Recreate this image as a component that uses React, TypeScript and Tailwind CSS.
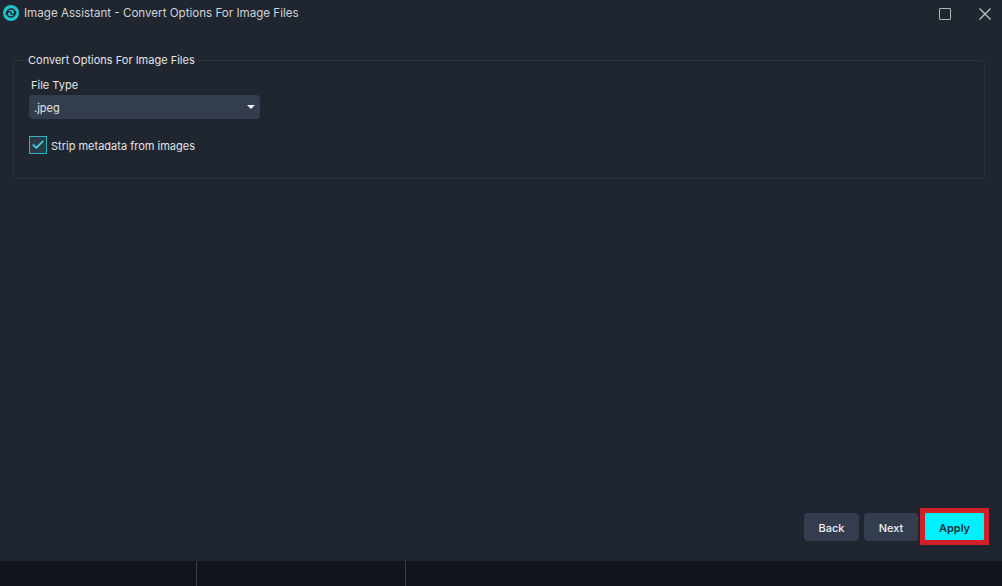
import { Check } from 'lucide-react';

function Logo() {
  return (
    <svg width="16" height="16" viewBox="0 0 16 16" fill="none" className="-mt-[1px]">
      <circle cx="8" cy="8" r="8" fill="#1fc4cf" />
      <path
        d="M3.4 9.4C3 6.2 5.6 3.7 8.5 4c1.9.2 3.2 1.5 3.4 3 .1 1.3-.9 2.4-2.2 2.4-1.1 0-1.8-.8-1.8-1.6"
        stroke="#1c2631"
        strokeWidth="1.4"
        strokeLinecap="round"
      />
      <path
        d="M12.6 6.6c.4 3.2-2.2 5.7-5.1 5.4-1.9-.2-3.2-1.5-3.4-3-.1-1.3.9-2.4 2.2-2.4 1.1 0 1.8.8 1.8 1.6"
        stroke="#1c2631"
        strokeWidth="1.4"
        strokeLinecap="round"
      />
    </svg>
  );
}

function WindowControls() {
  return (
    <div className="flex items-center gap-[28px] pr-[11px]">
      <div className="w-[12px] h-[12px] border-[1.5px] border-[#b4b8bd] rounded-[1px]" />
      <svg width="12" height="12" viewBox="0 0 12 12" stroke="#c4c7cb" strokeWidth="1.2">
        <path d="M0.5 0.5L11.5 11.5M11.5 0.5L0.5 11.5" />
      </svg>
    </div>
  );
}

function FooterButton({ label, width }: { label: string; width: string }) {
  return (
    <button className={`h-[28px] pt-[3px] ${width} rounded-[4px] bg-[#333d4d] text-[#eef0f2] text-[11px] font-medium`}>
      {label}
    </button>
  );
}

export default function App() {
  return (
    <div className="w-[1002px] h-[586px] flex flex-col bg-[#1f2630] overflow-hidden font-['Inter',sans-serif] text-[#e3e5e8]">
      {/* Title bar */}
      <div className="h-[27px] flex items-center justify-between shrink-0">
        <div className="flex items-center gap-[5px] pl-[3px]">
          <Logo />
          <span className="text-[11.6px] text-[#cfd2d6]">Image Assistant - Convert Options For Image Files</span>
        </div>
        <WindowControls />
      </div>

      {/* Content */}
      <div className="flex-1 flex flex-col justify-between pl-[13px] pr-[13px] pt-[25px] pb-[16px]">
        <fieldset className="h-[127px] mr-[4px] border border-[#2a323e] rounded-[4px] pl-[15px] pr-[16px]">
          <legend className="px-[1px] -ml-[2px] text-[11px] text-[#e3e5e8]">Convert Options For Image Files</legend>
          <div className="mt-[8px] text-[11px] ml-[2px] text-[#e3e5e8]">File Type</div>
          <div className="mt-[2px] w-[231px] h-[24px] rounded-[4px] bg-[#333d4d] flex items-center justify-between pl-[5px] pr-[4px]">
            <span className="text-[11px] pt-[2px]">.jpeg</span>
            <span className="w-0 h-0 mr-[1px] border-x-[4.5px] border-x-transparent border-t-[4px] border-t-[#eef0f2]" />
          </div>
          <div className="mt-[17px] flex items-center gap-[4px]">
            <div className="w-[18px] h-[18px] border-[1.5px] border-[#2cb5bf] bg-[#2c3a48] flex items-center justify-center">
              <Check size={14} strokeWidth={3} className="text-[#3fe0ea]" />
            </div>
            <span className="text-[11px] pt-[2px]">Strip metadata from images</span>
          </div>
        </fieldset>

        <div className="flex justify-end items-center">
          <FooterButton label="Back" width="w-[55px]" />
          <div className="w-[5px]" />
          <FooterButton label="Next" width="w-[54px]" />
          <div className="w-[2px]" />
          <div className="border-[5px] border-[#d0202a]">
            <button className="block h-[27px] w-[59px] pt-[3px] bg-[#00f0ff] text-[#10303a] text-[11px] font-semibold rounded-[1px]">
              Apply
            </button>
          </div>
        </div>
      </div>

      {/* Bottom strip */}
      <div className="h-[25px] shrink-0 bg-[#10141b] flex">
        <div className="w-[197px] border-r border-[#3a3f47]" />
        <div className="w-[209px] border-r border-[#3a3f47]" />
      </div>
    </div>
  );
}
